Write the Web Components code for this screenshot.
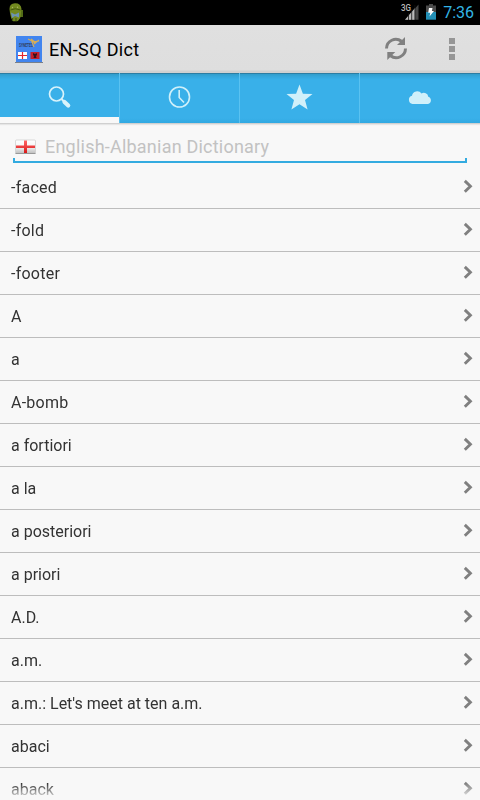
<!DOCTYPE html>
<html lang="en">
<head>
<meta charset="utf-8">
<title>EN-SQ Dict</title>
<style>
html,body{margin:0;height:100%;overflow:hidden;background:#f8f8f8}
body{font-family:Roboto,"Liberation Sans",sans-serif}
</style>
</head>
<body>
<dict-app></dict-app>
<script>
function define(name, html, ready) {
  const template = document.createElement('template');
  template.innerHTML = html;
  customElements.define(name, class extends HTMLElement {
    constructor() {
      super();
      this.attachShadow({ mode: 'open' }).append(template.content.cloneNode(true));
    }
    connectedCallback() { if (ready) ready(this, this.shadowRoot); }
  });
}

define('status-bar', `
<style>
:host{display:flex;height:25px;background:#000;align-items:center;color:#33b5e5;box-sizing:border-box;padding:0 6px 0 8px}
svg{display:block;flex:none}
.space{flex:1}
.bat{margin-left:7px}
.time{font-size:16px;line-height:25px;margin-left:7px}
</style>
<svg width="16" height="25" viewBox="0 0 16 25">
  <path d="M12 10h3v7h-3z" fill="#526b17"/>
  <path d="M1.500 9Q1.500 3.500 7 3.300Q13 3.200 13.500 9L12.500 17Q11 21 8.800 21.300H5Q2.500 18 2 13Z" fill="#72891f"/>
  <path d="M2.500 10Q7 7.500 12.500 10" stroke="#43570f" fill="none"/>
  <circle cx="4.500" cy="7.500" r=".7" fill="#a9b46a"/><circle cx="9.500" cy="7.300" r=".7" fill="#a9b46a"/>
  <path d="M3 12.500l4 2 4-2v5l-4-1.500-3 2z" fill="#6b93b5"/>
  <path d="M4.500 18v3M8 18v3" stroke="#425716" stroke-width="1.200"/>
</svg>
<span class="space"></span>
<svg width="19" height="25" viewBox="0 0 19 25">
  <text x="1" y="11" font-size="9" fill="#bbb" font-weight="500" font-family="Roboto" textLength="10" lengthAdjust="spacingAndGlyphs">3G</text>
  <path d="M5 19.700L18.500 4.500V19.700Z" fill="#464646"/>
  <path d="M5 19.700L15 8V19.700Z" fill="#b9b9b9"/>
  <path d="M8.500 13v7M11.700 9v11M14.900 5v15" stroke="#111" stroke-width=".8"/>
</svg>
<svg class="bat" width="10" height="25" viewBox="0 0 10 25">
  <path d="M3 4h4v1.500h3V12H0V5.500h3z" fill="#4a4a4a"/><path d="M0 12h10v7.700H0z" fill="#238fb5"/>
  <path d="M3 8h3.500l-.6 3H8l-4.500 5.500.8-3.800H2.200z" fill="#fff"/>
</svg>
<span class="time">7:36</span>`);

define('action-bar', `
<style>
:host{display:flex;height:48px;box-sizing:border-box;background:linear-gradient(#e0e0e0,#dedede 45px,#d0d0d0 46px);align-items:center;padding:0 25px 0 14px;color:#000}
svg{display:block;flex:none}
.title{font-size:18px;line-height:24px;margin:2px 0 0 6px;flex:1;white-space:nowrap;letter-spacing:.35px}
.refresh{margin-right:41px}
</style>
<svg width="29" height="48" viewBox="14 25 29 48">
  <path d="M16 36h26v26H16z" fill="#4285ef"/><path d="M15 62.500h28" stroke="#78808b"/>
  <text x="19" y="47.300" font-size="4.500" font-weight="700" fill="#303e60" font-family="Roboto" textLength="14" lengthAdjust="spacingAndGlyphs">SYNETEC</text>
  <path d="M28 39l6 3 1 2M31 39l4 3M34 47l-2-5 7-1M34 44l5-4" stroke="#d8ae57" stroke-width="1.100" fill="none"/>
  <path d="M18 52h9v7h-9z" fill="#fff"/><path d="M18 55.500h9M22.500 52v7" stroke="#e32630" stroke-width="1.200"/>
  <path d="M30.500 52h9v7h-9z" fill="#c5202b"/><path d="M33 53l2 1 2-1v2l-1 1 .5 2H33.500l.5-2-1-1z" fill="#35121c"/>
</svg>
<span class="title"><slot></slot></span>
<svg class="refresh" width="24" height="24" viewBox="384 37 24 24">
  <g fill="none" stroke="#808080" stroke-width="3"><path d="M386.500 48.500A9.300 9.300 0 0 1 401.500 41.300"/><path d="M405.500 48.500A9.300 9.300 0 0 1 390.500 55.700"/></g>
  <path d="M405 37v8h-8zM387.300 60v-8h8z" fill="#808080"/>
</svg>
<svg width="6" height="24" viewBox="0 0 6 24"><path d="M0 1h6v6H0zM0 9h6v6H0zM0 17h6v6H0z" fill="#969696"/></svg>`);

define('tab-item', `
<style>
:host{display:flex;flex:none;width:120px;box-sizing:border-box;height:50px;justify-content:center;border-right:1px solid #5ac2f1}
:host(:last-child){border-right:0}
.tab{display:flex;flex:1;justify-content:center;box-sizing:border-box}
:host([active]) .tab{border-bottom:6px solid #f8f8f8}
::slotted(svg){display:block;width:30px;height:48px;flex:none}
</style><div class="tab"><slot></slot></div>`);

define('tab-strip', `
<style>
:host{display:flex;height:50px;background:linear-gradient(#2c7da3,#2c7da3 1px,#319dcb 1px,#35a8dd 4px,#39b0e9 7px,#39b0e9 45px,#31a9e2 50px);box-shadow:0 1px 0 #d0d0d0,0 2px 1px #e6e6e6}
</style>
<tab-item active><svg viewBox="44.5 73 30 48"><circle cx="56" cy="94" r="7" fill="none" stroke="#d9f3fb" stroke-width="1.700"/><path d="M61 99l3 3" stroke="#d9f3fb" stroke-width="2"/><path d="M64 102l3.700 3.500" stroke="#d9f3fb" stroke-width="4.200" stroke-linecap="round"/></svg></tab-item>
<tab-item><svg viewBox="164.5 73 30 48"><circle cx="179" cy="97" r="10" fill="none" stroke="#d0f0fa" stroke-width="1.600"/><path d="M178.700 90v7.500l4.800 5" fill="none" stroke="#d0f0fa" stroke-width="1.600"/></svg></tab-item>
<tab-item><svg viewBox="284.5 73 30 48"><path d="M299 84.500l3.400 9.200 9.600.2-7.500 6 2.600 9.600-8.100-5.200-8.100 5.200 2.600-9.600-7.500-6 9.600-.2z" fill="#d0f0fa"/></svg></tab-item>
<tab-item><svg viewBox="405 73 30 48"><path d="M412.500 104a4.200 4.200 0 0 1-.5-8.200 5.200 5.200 0 0 1 9.500-2.200 4.400 4.400 0 0 1 6.800 3.100 3.800 3.800 0 0 1-.3 7.300z" fill="#d0f0fa"/></svg></tab-item>`);

define('search-field', `
<style>
:host{display:flex;height:43px;box-sizing:border-box;padding:0 13px}
.box{flex:1;display:flex;height:40px;box-sizing:border-box;align-items:flex-end;border-bottom:2px solid #33abe0;
 background:linear-gradient(#33abe0,#33abe0) 0 100%/2px 3px no-repeat,linear-gradient(#33abe0,#33abe0) 100% 100%/2px 3px no-repeat}
svg{display:block;margin:0 0 6px 2px;flex:none}
span{color:#c2c2c2;font-size:18px;line-height:24px;margin:0 0 2px 9px;white-space:nowrap;letter-spacing:.22px}
</style>
<div class="box">
<svg width="21" height="17" viewBox="0 0 21 17"><defs><linearGradient id="g" x2="0" y2="1"><stop stop-color="#fff"/><stop offset=".5" stop-color="#f5f5f5"/><stop offset="1" stop-color="#bdbdbd"/></linearGradient><linearGradient id="r" x2="0" y2="1"><stop stop-color="#f66"/><stop offset="1" stop-color="#d81818"/></linearGradient></defs>
<rect x=".5" y="2" width="20" height="13.500" rx="1" fill="url(#g)" stroke="#ccc" stroke-width=".7"/><path d="M.5 15.500h20" stroke="#999"/><path d="M1 7.500h8V2.500h3v5h8v2.500h-8v5H9v-5H1z" fill="url(#r)"/></svg>
<span><slot></slot></span></div>`);

define('word-row', `
<style>
:host{display:flex;height:43px;box-sizing:border-box;border-bottom:1px solid #bdbdbd;align-items:center;padding:0 6px 0 11px;color:#333}
span{flex:1;font-size:16px;line-height:20px;padding-top:2px;white-space:nowrap}
:host([hyphen]) span{letter-spacing:.25px}
svg{display:block;flex:none}
</style>
<span><slot></slot></span>
<svg width="11" height="42" viewBox="0 0 11 42"><path d="M1.800 14.900l5.600 5.400-5.600 5.400" fill="none" stroke="#808080" stroke-width="2.900"/></svg>`);

const words = ['-faced','-fold','-footer','A','a','A-bomb','a fortiori','a la','a posteriori','a priori','A.D.','a.m.',"a.m.: Let's meet at ten a.m.",'abaci','aback'];

define('word-list', `
<style>
:host{display:block;flex:1;min-height:0;overflow:hidden;-webkit-mask-image:linear-gradient(#000 calc(100% - 17px),transparent);mask-image:linear-gradient(#000 calc(100% - 17px),transparent)}
</style>`, (host, root) => {
  for (const word of words) {
    const row = document.createElement('word-row');
    row.textContent = word;
    row.toggleAttribute('hyphen', word.includes('-'));
    root.append(row);
  }
});

define('dict-app', `
<style>:host{display:flex;flex-direction:column;width:480px;height:800px;overflow:hidden;background:#f8f8f8}
status-bar,action-bar,tab-strip,search-field{flex:none}</style>
<status-bar></status-bar>
<action-bar>EN-SQ Dict</action-bar>
<tab-strip></tab-strip>
<search-field>English-Albanian Dictionary</search-field>
<word-list></word-list>`);
</script>
</body>
</html>
